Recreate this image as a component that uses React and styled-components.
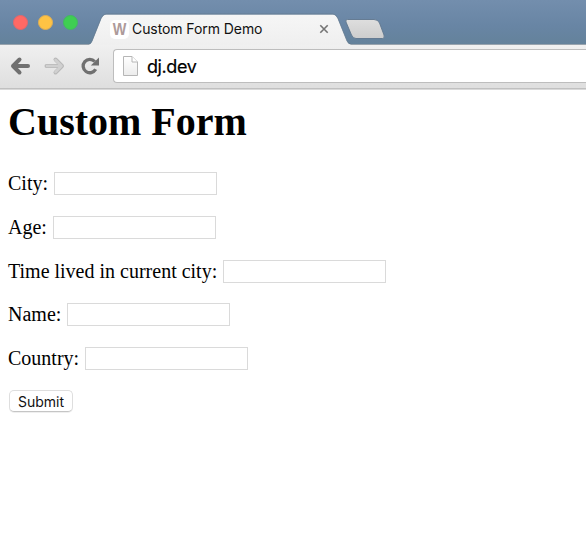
import React from 'react';
import styled, { createGlobalStyle } from 'styled-components';

const GlobalStyle = createGlobalStyle`
  * { box-sizing: border-box; }
  body { margin: 0; background: #fff; overflow: hidden; }
`;

const Window = styled.div`
  width: 586px;
  height: 550px;
  background: #fff;
  overflow: hidden;
`;

const TitleBar = styled.header`
  display: flex;
  height: 45px;
  background: linear-gradient(#738ead, #6885a4 60%, #64829b);
  border-bottom: 1px solid #98a3ad;
`;

const TrafficLights = styled.div`
  display: flex;
  gap: 10px;
  padding: 15px 0 0 13px;
  width: 89px;
  flex: none;
`;

const Light = styled.span`
  width: 15px;
  height: 15px;
  border-radius: 50%;
  background: ${(p) => p.$color};
  border: 1px solid ${(p) => p.$edge};
`;

const Tab = styled.div`
  position: relative;
  width: 263px;
  height: 45px;
  flex: none;
`;

const TabShape = styled.svg`
  position: absolute;
  left: 0;
  top: 0;
  display: block;
`;

const TabContent = styled.div`
  position: relative;
  display: flex;
  align-items: center;
  height: 30px;
  margin: 14px 23px 0 21px;
`;

const Favicon = styled.span`
  width: 19px;
  height: 19px;
  margin-right: 3px;
  border-radius: 5px;
  background: #fff;
  color: #ad9a9a;
  font: bold 16px/20px 'Liberation Sans', sans-serif;
  display: flex;
  justify-content: center;
`;

const FaviconLetter = styled.span`
  transform: scaleX(0.9);
`;

const TabTitle = styled.span`
  font: 14px/20px Inter, sans-serif;
  letter-spacing: -0.08px;
  color: #111;
  white-space: nowrap;
  flex: 1;
`;

const NewTab = styled.svg`
  display: block;
  flex: none;
  margin: 18px 0 0 -8px;
`;

const Toolbar = styled.nav`
  display: flex;
  align-items: center;
  height: 45px;
  padding-bottom: 2px;
  background: linear-gradient(#f0f0f0, #dedede);
  border-bottom: 1px solid #d9d9d9;
  box-shadow: inset 0 -1px #c0c0c0;
`;

const NavIcons = styled.svg`
  display: block;
  width: 113px;
  height: 43px;
  flex: none;
`;

const AddressBar = styled.div`
  display: flex;
  align-items: center;
  flex: 1;
  height: 34px;
  padding-left: 9px;
  border: 1px solid #bdbdbd;
  border-right: 0;
  border-radius: 4px 0 0 4px;
  background: #fff;
`;

const PageIcon = styled.svg`
  display: block;
  flex: none;
`;

const Address = styled.span`
  margin-left: 9px;
  padding-top: 1px;
  font: 18px/24px Inter, sans-serif;
  letter-spacing: -0.4px;
  color: #000;
  -webkit-text-stroke: 0.2px #000;
`;

const Page = styled.main`
  padding: 9px 8px 0;
  font-family: 'Liberation Serif', serif;
  color: #000;
`;

const Heading = styled.h1`
  margin: 0 0 27px;
  font-size: 40px;
  line-height: 46px;
`;

const Form = styled.form`
  display: flex;
  flex-direction: column;
  gap: 20.8px;
  align-items: flex-start;
`;

const Field = styled.label`
  display: flex;
  align-items: center;
  gap: 5.7px;
  height: 23px;
  font-size: 20px;
  line-height: 23px;
  white-space: nowrap;
`;

const Input = styled.input`
  width: 163px;
  height: 23px;
  padding: 2px;
  border: 1px solid #dadada;
  border-radius: 0;
  background: #fff;
  outline: none;
`;

const Submit = styled.button`
  width: 64px;
  height: 22px;
  margin: -1px 0 0 1px;
  padding: 2px 0 0;
  border: 1px solid #dedede;
  border-bottom-color: #c5c5c5;
  border-radius: 5px;
  background: #fff;
  box-shadow: 0 1px #efefef;
  color: #111;
  font: 14px/18px Inter, sans-serif;
`;

const fields = ['City:', 'Age:', 'Time lived in current city:', 'Name:', 'Country:'];

export default function App() {
  return (
    <Window>
      <GlobalStyle />
      <TitleBar>
        <TrafficLights>
          <Light $color="#ff6965" $edge="#e4666b" />
          <Light $color="#ffc344" $edge="#dfae55" />
          <Light $color="#3fce52" $edge="#43b861" />
        </TrafficLights>
        <Tab>
          <TabShape width="263" height="45" viewBox="0 0 263 45">
            <defs>
              <linearGradient id="tab" x1="0" y1="0" x2="0" y2="1">
                <stop offset="0" stopColor="#f6f6f6" />
                <stop offset="1" stopColor="#efefef" />
              </linearGradient>
            </defs>
            <path
              d="M0 44.5Q2 44 3 41.5L12 19Q14 14.5 17 14.5H244Q247 14.5 249 19L258 41Q259.5 44.5 262 44.5V45H0Z"
              fill="url(#tab)"
            />
            <path
              d="M0 44Q2 43.5 3 41L12 18.5Q14 14 17 14H244Q247 14 249 18.5L258 41Q259.5 44 262 44"
              fill="none"
              stroke="#657b90"
              strokeWidth="0.8"
            />
          </TabShape>
          <TabContent>
            <Favicon>
              <FaviconLetter>W</FaviconLetter>
            </Favicon>
            <TabTitle>Custom Form Demo</TabTitle>
            <svg width="10" height="10" viewBox="0 0 10 10">
              <path d="M1.3 1.3L8.7 8.7M8.7 1.3L1.3 8.7" stroke="#747474" strokeWidth="1.6" />
            </svg>
          </TabContent>
        </Tab>
        <NewTab width="43" height="22" viewBox="0 0 43 22">
          <defs>
            <linearGradient id="newTab" x1="0" y1="0" x2="0" y2="1">
              <stop offset="0" stopColor="#dedede" />
              <stop offset="1" stopColor="#cdcdcd" />
            </linearGradient>
          </defs>
          <path
            d="M3.5 1.5H30Q34 1.5 35.5 5L40 17Q41 20.5 38.5 20.5H12Q9 20.5 7.5 17L2 4Q1 1.5 3.5 1.5Z"
            fill="url(#newTab)"
            stroke="#5f768d"
            strokeWidth="0.9"
          />
        </NewTab>
      </TitleBar>
      <Toolbar>
        <NavIcons viewBox="0 0 113 43" fill="none">
          <g strokeWidth="4" strokeLinecap="round" strokeLinejoin="round">
            <path d="M13 21H28M19.5 14.5L13 21L19.5 27.5" stroke="#707070" />
            <path d="M46.5 21H62M55.5 14.5L62 21L55.5 27.5" stroke="#b9b9b9" />
            <path d="M47 21H61.5M55.5 15L61.5 21L55.5 27" stroke="#d0d0d0" strokeWidth="2.5" />
          </g>
          <path d="M94.8 16.5A6.7 6.7 0 1 0 95.7 24.3" stroke="#707070" strokeWidth="3.3" />
          <path d="M99 12.5V20.5H90.8Z" fill="#707070" />
        </NavIcons>
        <AddressBar>
          <PageIcon width="15" height="20" viewBox="0 0 15 20">
            <defs>
              <linearGradient id="paper" x1="0" y1="0" x2="0" y2="1">
                <stop offset="0" stopColor="#fff" />
                <stop offset="1" stopColor="#ececec" />
              </linearGradient>
            </defs>
            <path d="M.5.5H9L14.5 6V19.5H.5Z" fill="url(#paper)" stroke="#b6b6b6" />
            <path d="M9 .5V6H14.5" fill="#fff" stroke="#b6b6b6" />
          </PageIcon>
          <Address>dj.dev</Address>
        </AddressBar>
      </Toolbar>
      <Page>
        <Heading>Custom Form</Heading>
        <Form onSubmit={(e) => e.preventDefault()}>
          {fields.map((label) => (
            <Field key={label}>
              {label}
              <Input type="text" />
            </Field>
          ))}
          <Submit type="submit">Submit</Submit>
        </Form>
      </Page>
    </Window>
  );
}
